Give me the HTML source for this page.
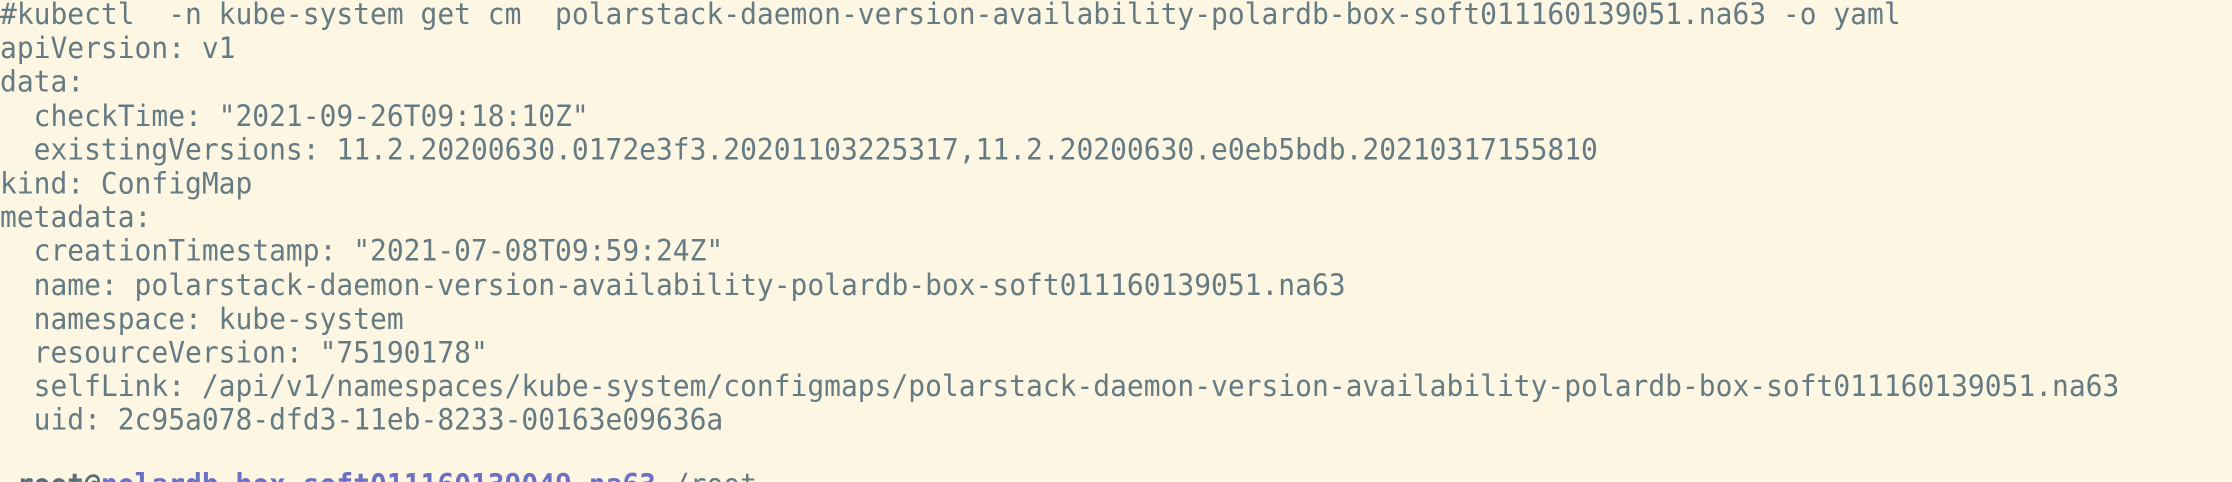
<!DOCTYPE html>
<html><head><meta charset="utf-8"><style>
html,body{margin:0;padding:0;background:#fdf6e3;width:2232px;height:482px;overflow:hidden}
#w{position:relative;width:2232px;height:482px;overflow:hidden}
pre{position:absolute;left:0;top:-2px;margin:0;font-family:"DejaVu Sans Mono","Liberation Mono",monospace;font-size:27.94px;line-height:32.19px;color:#657b83;transform:scaleY(1.05);transform-origin:0 0;white-space:pre}
.p{color:#6c71c4;font-weight:bold}.r{color:#586e75;font-weight:bold}
.pl{position:relative;top:-3px}
</style></head><body><div id="w"><pre>#kubectl  -n kube-system get cm  polarstack-daemon-version-availability-polardb-box-soft011160139051.na63 -o yaml
apiVersion: v1
data:
  checkTime: "2021-09-26T09:18:10Z"
  existingVersions: 11.2.20200630.0172e3f3.20201103225317,11.2.20200630.e0eb5bdb.20210317155810
kind: ConfigMap
metadata:
  creationTimestamp: "2021-07-08T09:59:24Z"
  name: polarstack-daemon-version-availability-polardb-box-soft011160139051.na63
  namespace: kube-system
  resourceVersion: "75190178"
  selfLink: /api/v1/namespaces/kube-system/configmaps/polarstack-daemon-version-availability-polardb-box-soft011160139051.na63
  uid: 2c95a078-dfd3-11eb-8233-00163e09636a

<span class="pl"> <span class="r">root@</span><span class="p">polardb-box-soft011160139049.na63</span> /root</span></pre></div></body></html>
